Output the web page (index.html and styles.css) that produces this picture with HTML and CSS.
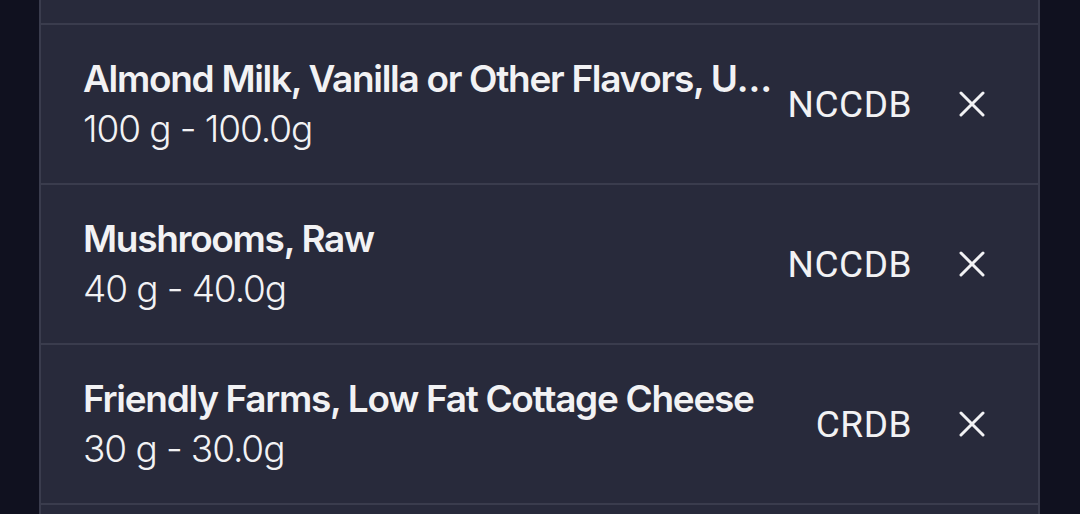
FILE: index.html
```html
<!DOCTYPE html>
<html>
<head>
<meta charset="utf-8">
<link rel="stylesheet" href="styles.css">
</head>
<body>
<div class="panel">
  <div class="stub"></div>
  <div class="row">
    <div class="info">
      <div class="title">Almond Milk, Vanilla or Other Flavors, Unsweetened</div>
      <div class="amount">100 g - 100.0g</div>
    </div>
    <div class="source">NCCDB</div>
    <button class="remove" aria-label="Remove">
      <svg width="26" height="26" viewBox="0 0 26 26"><path d="M2 2 L24 24 M24 2 L2 24" stroke="#f2f2f4" stroke-width="3" stroke-linecap="round"/></svg>
    </button>
  </div>
  <div class="row">
    <div class="info">
      <div class="title">Mushrooms, Raw</div>
      <div class="amount">40 g - 40.0g</div>
    </div>
    <div class="source">NCCDB</div>
    <button class="remove" aria-label="Remove">
      <svg width="26" height="26" viewBox="0 0 26 26"><path d="M2 2 L24 24 M24 2 L2 24" stroke="#f2f2f4" stroke-width="3" stroke-linecap="round"/></svg>
    </button>
  </div>
  <div class="row">
    <div class="info">
      <div class="title">Friendly Farms, Low Fat Cottage Cheese</div>
      <div class="amount">30 g - 30.0g</div>
    </div>
    <div class="source">CRDB</div>
    <button class="remove" aria-label="Remove">
      <svg width="26" height="26" viewBox="0 0 26 26"><path d="M2 2 L24 24 M24 2 L2 24" stroke="#f2f2f4" stroke-width="3" stroke-linecap="round"/></svg>
    </button>
  </div>
  <div class="row"></div>
</div>
</body>
</html>
```
FILE: styles.css
```css
html, body {
  margin: 0;
  padding: 0;
}
body {
  width: 1080px;
  height: 514px;
  overflow: hidden;
  background: #10111f;
  font-family: Inter, "Noto Sans", sans-serif;
  color: #f2f2f4;
}
.panel {
  margin: 0 40px 0 39px;
  background: #282a3b;
  border-left: 2px solid #3a3c4d;
  border-right: 2px solid #3a3c4d;
  min-height: 600px;
}
.stub {
  height: 23px;
}
.row {
  height: 158px;
  border-top: 2px solid #3a3c4d;
  display: flex;
  align-items: center;
  gap: 10px;
  padding: 0 40px 0 42px;
}
.info {
  flex: 1;
  min-width: 0;
}
.title {
  font-size: 37px;
  font-weight: 600;
  letter-spacing: -1.3px;
  line-height: 50px;
  white-space: nowrap;
  overflow: hidden;
  text-overflow: ellipsis;
}
.amount {
  font-size: 37px;
  font-weight: 300;
  letter-spacing: -1.1px;
  line-height: 50px;
}
.source {
  font-family: Roboto, "Liberation Sans", sans-serif;
  font-size: 37px;
  font-weight: 400;
  letter-spacing: 0.5px;
}
.remove {
  width: 52px;
  height: 52px;
  margin-left: 24px;
  padding: 0;
  border: 0;
  background: none;
  display: flex;
  align-items: center;
  justify-content: center;
}
```
